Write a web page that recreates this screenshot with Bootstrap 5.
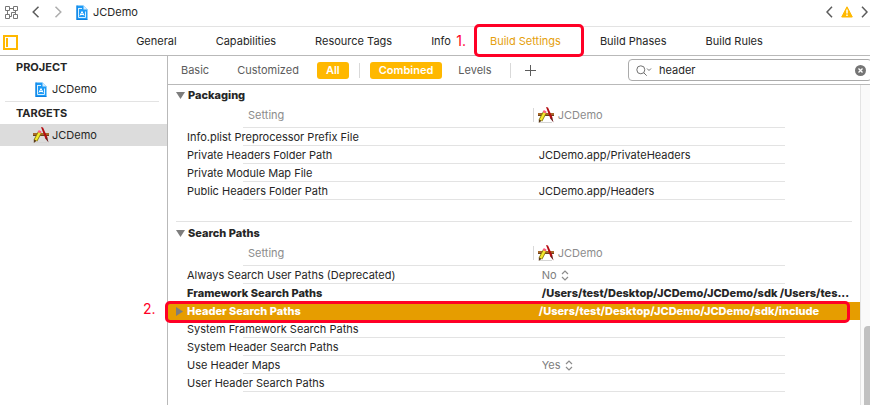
<!DOCTYPE html>
<html lang="en">
<head>
<meta charset="utf-8">
<meta name="viewport" content="width=device-width, initial-scale=1">
<title>JCDemo</title>
<link href="https://cdn.jsdelivr.net/npm/bootstrap@5.3.0/dist/css/bootstrap.min.css" rel="stylesheet">
<style>
  :root { --amber: #ffb800; --line: #e3e3e3; --rule: #b9b9b9; --marker: #ff0026; }
  body { font-family: Inter, "Liberation Sans", sans-serif; font-size: 11px; line-height: 16px; color: #262626; background: #fff; }
  svg { display: block; flex: none; }
  button { font: inherit; color: inherit; background: none; border: 0; padding: 0; }
  a { color: inherit; text-decoration: none; }
  .path-bar { height: 27px; border-bottom: 1px solid var(--line); padding: 0 2px 2px 5px; }
  .path-bar .crumbs { gap: 14px; }
  .path-bar .file { gap: 5px; }
  .tab-bar { height: 29px; border-bottom: 1px solid var(--rule); }
  .tab-bar ul { gap: 39px; }
  .tab-toggle { width: 29px; padding: 2px 0 0 3px; }
  .current-tab { color: #e5a00d; }
  .marked { position: relative; }
  .marker { position: absolute; border: 3px solid var(--marker); border-radius: 5px; pointer-events: none; }
  .marked .marker { inset: -9px -23px -8px -16px; }
  .step { position: absolute; color: var(--marker); font-size: 14px; }
  .marked .step { right: calc(100% + 24px); top: 0; }
  .sidebar-pane { width: 168px; border-right: 1px solid var(--rule); }
  .sidebar-pane h2 { font-size: 11px; line-height: 22px; font-weight: 700; padding-left: 16px; margin: 0; }
  .sidebar-pane .entry { height: 22px; padding-left: 33px; gap: 3px; }
  .sidebar-pane .chosen { background: #dcdcdc; }
  .side-rule { height: 1px; margin: 1px 8px 0 5px; background: var(--line); }
  .filter-bar { height: 29px; border-bottom: 1px solid var(--rule); padding-left: 13px; color: #5c5c5c; }
  .filter-bar .scope { gap: 28px; margin-right: 18px; }
  .filter-bar .split { gap: 10px; margin-right: 16px; }
  .filter-bar .extra { gap: 14px; margin-left: 18px; }
  .filter-bar .pill { background: var(--amber); color: #fff; font-weight: 600; border-radius: 3px; height: 17px; padding: 0 9px; }
  .bar-sep { width: 1px; height: 15px; background: #d9d9d9; }
  .search-field { width: 244px; height: 22px; margin-right: -2px; border: 1px solid #ababab; border-radius: 4px; padding: 0 5px 0 7px; gap: 7px; }
  .search-field input { border: 0; outline: 0; padding: 0; min-width: 0; font-size: 11px; color: #262626; }
  .settings-pane section { padding-bottom: 21px; }
  .section-rule { height: 1px; margin: 0 8px 1px; background: var(--line); }
  .settings-pane h3 { font-size: 11px; line-height: 20px; font-weight: 800; margin: 0; padding-left: 8px; gap: 3px; }
  .settings { width: 100%; table-layout: fixed; }
  .settings tr { height: 18px; background: linear-gradient(var(--line), var(--line)) center bottom / calc(100% - 150px) 1px no-repeat; }
  .settings thead tr { height: 23px; }
  .settings th, .settings td { padding: 0; height: inherit; font-weight: 400; white-space: nowrap; line-height: 16px; }
  .settings thead th { color: #8c8c8c; padding-bottom: 3px; }
  .settings .name-col { width: 53%; }
  .settings thead th:first-child { padding-left: 80px; }
  .settings tbody th { padding-left: 19px; }
  .settings tbody td { padding-left: 4px; }
  .settings .target-name { border-left: 1px solid #d9d9d9; height: 14px; margin-left: -2px; padding-left: 4px; gap: 4px; }
  .settings .changed th, .settings .changed td { font-weight: 800; }
  .settings tr.picked { background: #e69d00; color: #fff; }
  .settings tr.picked th { padding-left: 8px; }
  .choice { padding-left: 3px; gap: 4px; color: #7d7d7d; }
  .choice select { appearance: none; border: 0; padding: 0; background: none; font: inherit; color: inherit; width: 15px; }
  .choice .wide { width: 19px; }
  .picked-wrap { position: relative; }
  .picked-wrap .marker { left: -3px; right: 10px; top: 58px; height: 22px; }
  .picked-wrap .step { left: -25px; top: 58px; }
  .scroll-track { width: 10px; background: #fafafa; border-left: 1px solid #e4e4e4; padding-left: 3px; padding-top: 241px; }
  .scroll-thumb { background: #c1c1c1; border-radius: 4px 0 0 0; }
</style>
<script src="https://cdn.jsdelivr.net/npm/bootstrap@5.3.0/dist/js/bootstrap.bundle.min.js"></script>
</head>
<body class="d-flex flex-column vh-100 overflow-hidden">
<svg width="0" height="0" class="position-absolute" aria-hidden="true">
  <symbol id="doc" viewBox="0 0 12 15">
    <path d="M.5.5h7l4 4v10H.5z" fill="#1d9bf6"/>
    <path d="M7.500.5l4 4h-4z" fill="#d5ecfd"/>
    <path d="M1 .5v14M.5 14.500h11" stroke="#0d7fe0" fill="none"/>
    <path d="M2.500 3v9.500h7V6.500M2 3.500h4" fill="none" stroke="#d9efff"/>
    <path d="M4 10.500L6 6.500l2 4M4 9.500h4" fill="none" stroke="#fff"/>
  </symbol>
  <symbol id="app" viewBox="0 0 16 16">
    <path d="M2 15.500h12" fill="none" stroke="#d5d5d5"/>
    <path d="M0 6h16v2.500H0z" fill="#a8682b"/>
    <path d="M0 8.500h16" stroke="#69401c"/>
    <path d="M7 5L2.500 13.500" stroke="#8b7a10" stroke-width="4"/>
    <path d="M7 5L2.500 13.500" stroke="#f3e82c" stroke-width="2.400"/>
    <path d="M.8 12.200l2.800 1.600L.8 16z" fill="#5a3a1a"/>
    <path d="M5.800 3l2.700 1.500-1 2-2.700-1.500z" fill="#ff5b80"/>
    <path d="M8 0l2 .5 4.500 10-2 1.500z" fill="#b40d12"/>
    <path d="M12.300 11.500l2-1 1.200 5z" fill="#6a1618"/>
  </symbol>
  <symbol id="updown" viewBox="0 0 8 11">
    <path d="M1 4l3-3 3 3M1 7l3 3 3-3" fill="none" stroke="#8c8c8c" stroke-width="1.200"/>
  </symbol>
</svg>

<header class="path-bar d-flex align-items-center flex-shrink-0">
  <div class="crumbs d-flex align-items-center">
    <button aria-label="Related items"><svg width="13" height="13" viewBox="0 0 13 13" fill="none" stroke="#777"><path d="M.5.5h4v4h-4zM8.500.5h4v4h-4zM.5 8.500h4v4h-4zM8.500 8.500h4v4h-4zM4.500 2.500h4M2.500 4.500v4M4.500 10.500h2v-4h4v-2M10.500 6.500v2"/></svg></button>
    <button aria-label="Back"><svg width="8" height="12" viewBox="0 0 8 12" fill="none" stroke="#5c5c5c" stroke-width="1.500"><path d="M6.500.7L1.200 6l5.300 5.300"/></svg></button>
    <button aria-label="Forward"><svg width="8" height="12" viewBox="0 0 8 12" fill="none" stroke="#adadad" stroke-width="1.500"><path d="M1.500.7L6.800 6l-5.300 5.300"/></svg></button>
    <a href="#" class="file d-flex align-items-center"><svg width="12" height="15"><use href="#doc"/></svg>JCDemo</a>
  </div>
  <div class="ms-auto d-flex align-items-center gap-2">
    <button aria-label="Previous issue"><svg width="7" height="12" viewBox="0 0 7 12" fill="none" stroke="#5c5c5c" stroke-width="1.500"><path d="M6 .7L1 6l5 5.300"/></svg></button>
    <button aria-label="Warnings"><svg width="12" height="12" viewBox="0 0 12 12"><path d="M6 .8L11.300 11H.7z" fill="#ffb800" stroke="#ffb800" stroke-linejoin="round"/><path d="M6 3.500v4M6 8.500v1.500" stroke="#fff" stroke-width="1.500"/></svg></button>
    <button aria-label="Next issue"><svg width="7" height="12" viewBox="0 0 7 12" fill="none" stroke="#5c5c5c" stroke-width="1.500"><path d="M1 .7L6 6l-5 5.300"/></svg></button>
  </div>
</header>

<nav class="tab-bar d-flex align-items-center flex-shrink-0">
  <div class="tab-toggle"><button class="d-block" aria-label="Toggle targets list"><svg width="15" height="15" viewBox="0 0 15 15" fill="none" stroke="#ffb800" stroke-width="2"><path d="M1 1h13v13H1zM4 3v9"/></svg></button></div>
  <ul class="list-unstyled d-flex justify-content-center flex-grow-1 mb-0">
    <li><a href="#">General</a></li>
    <li><a href="#">Capabilities</a></li>
    <li><a href="#">Resource Tags</a></li>
    <li><a href="#">Info</a></li>
    <li class="marked"><a href="#" class="current-tab">Build Settings</a><span class="marker"></span><span class="step">1.</span></li>
    <li><a href="#">Build Phases</a></li>
    <li><a href="#">Build Rules</a></li>
  </ul>
</nav>

<div class="d-flex flex-grow-1 align-items-stretch">
  <aside class="sidebar-pane flex-shrink-0">
    <h2>PROJECT</h2>
    <a href="#" class="entry d-flex align-items-center"><svg width="16" height="15"><use href="#doc"/></svg>JCDemo</a>
    <div class="side-rule"></div>
    <h2>TARGETS</h2>
    <a href="#" class="entry chosen d-flex align-items-center"><svg width="16" height="16"><use href="#app"/></svg>JCDemo</a>
  </aside>

  <main class="d-flex flex-column flex-grow-1">
    <div class="filter-bar d-flex align-items-center flex-shrink-0">
      <div class="scope d-flex"><button>Basic</button><button>Customized</button></div>
      <div class="split d-flex align-items-center">
        <button class="pill">All</button>
        <span class="bar-sep"></span>
        <button class="pill">Combined</button>
      </div>
      <button>Levels</button>
      <div class="extra d-flex align-items-center">
        <span class="bar-sep"></span>
        <button aria-label="Add"><svg width="11" height="11" viewBox="0 0 11 11" stroke="#5c5c5c"><path d="M5.500 0v11M0 5.500h11"/></svg></button>
      </div>
      <div class="search-field d-flex align-items-center ms-auto">
        <svg width="16" height="11" viewBox="0 0 16 11" fill="none" stroke="#707070"><circle cx="4.800" cy="4.800" r="4"/><path d="M7.700 7.700l3 3M11 3.500l2 2 2-2"/></svg>
        <input class="flex-grow-1" type="text" value="header" aria-label="Search settings">
        <button aria-label="Clear"><svg width="11" height="11" viewBox="0 0 11 11"><circle cx="5.500" cy="5.500" r="5.500" fill="#757575"/><path d="M3.500 3.500l4 4M7.500 3.500l-4 4" stroke="#fff" stroke-width="1.300"/></svg></button>
      </div>
    </div>

    <div class="d-flex flex-grow-1">
      <div class="settings-pane flex-grow-1">
        <section>
          <h3 class="d-flex align-items-center"><svg width="9" height="7" viewBox="0 0 9 7"><path d="M0 0h9L4.500 7z" fill="#7d7d7d"/></svg>Packaging</h3>
          <table class="settings">
            <thead><tr><th class="name-col">Setting</th><th><div class="target-name d-flex align-items-center"><svg width="16" height="16"><use href="#app"/></svg>JCDemo</div></th></tr></thead>
            <tbody>
              <tr><th>Info.plist Preprocessor Prefix File</th><td></td></tr>
              <tr><th>Private Headers Folder Path</th><td>JCDemo.app/PrivateHeaders</td></tr>
              <tr><th>Private Module Map File</th><td></td></tr>
              <tr><th>Public Headers Folder Path</th><td>JCDemo.app/Headers</td></tr>
            </tbody>
          </table>
        </section>
        <div class="section-rule"></div>
        <section class="pb-0">
          <h3 class="d-flex align-items-center"><svg width="9" height="7" viewBox="0 0 9 7"><path d="M0 0h9L4.500 7z" fill="#7d7d7d"/></svg>Search Paths</h3>
          <div class="picked-wrap">
          <table class="settings">
            <thead><tr><th class="name-col">Setting</th><th><div class="target-name d-flex align-items-center"><svg width="16" height="16"><use href="#app"/></svg>JCDemo</div></th></tr></thead>
            <tbody>
              <tr><th>Always Search User Paths (Deprecated)</th><td><div class="choice d-flex align-items-center"><select aria-label="Always Search User Paths"><option>No</option><option>Yes</option></select><svg width="8" height="11"><use href="#updown"/></svg></div></td></tr>
              <tr class="changed"><th>Framework Search Paths</th><td><div class="choice d-block text-reset">/Users/test/Desktop/JCDemo/JCDemo/sdk /Users/tes...</div></td></tr>
              <tr class="changed picked"><th><div class="d-flex align-items-center gap-1"><svg width="7" height="9" viewBox="0 0 7 9"><path d="M0 0v9l7-4.500z" fill="#7d7d7d"/></svg>Header Search Paths</div></th><td>/Users/test/Desktop/JCDemo/JCDemo/sdk/include</td></tr>
              <tr><th>System Framework Search Paths</th><td></td></tr>
              <tr><th>System Header Search Paths</th><td></td></tr>
              <tr><th>Use Header Maps</th><td><div class="choice d-flex align-items-center"><select class="wide" aria-label="Use Header Maps"><option>Yes</option><option>No</option></select><svg width="8" height="11"><use href="#updown"/></svg></div></td></tr>
              <tr><th>User Header Search Paths</th><td></td></tr>
            </tbody>
          </table>
          <span class="marker"></span><span class="step">2.</span>
          </div>
        </section>
      </div>
      <div class="scroll-track d-flex flex-shrink-0"><div class="scroll-thumb flex-grow-1"></div></div>
    </div>
  </main>
</div>
</body>
</html>
